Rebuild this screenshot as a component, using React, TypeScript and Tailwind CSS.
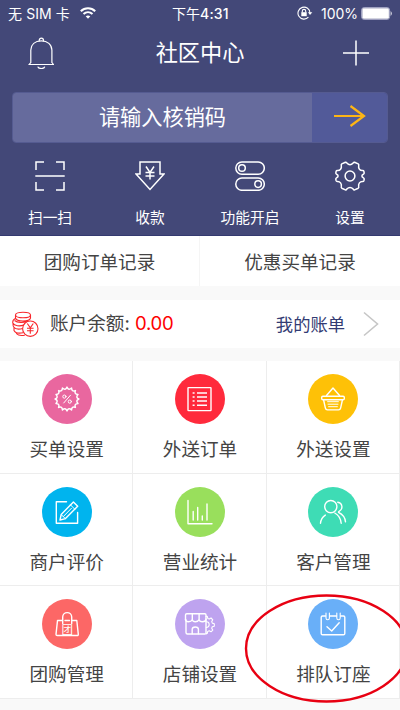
import React from "react";

const CJK = "font-['Noto_Sans_CJK_SC',sans-serif]";
const LATIN = "font-[Inter,'Noto_Sans_CJK_SC',sans-serif]";

// Closed outline with pointed teeth joined by curved valleys.
function ring(cx: number, cy: number, teeth: number, outer: number, inner: number) {
  let d = "";
  for (let i = 0; i < teeth; i++) {
    const a = (i / teeth) * Math.PI * 2 - Math.PI / 2;
    const b = ((i + 0.5) / teeth) * Math.PI * 2 - Math.PI / 2;
    const c = ((i + 1) / teeth) * Math.PI * 2 - Math.PI / 2;
    const p = (r: number, t: number) => `${(cx + r * Math.cos(t)).toFixed(2)} ${(cy + r * Math.sin(t)).toFixed(2)}`;
    if (i === 0) d += `M${p(outer, a)}`;
    d += `Q${p(inner, b)} ${p(outer, c)}`;
  }
  return d + "Z";
}

function Disc({ className, children }: { className: string; children: React.ReactNode }) {
  return (
    <div className={`size-[50px] rounded-full ${className}`}>
      <svg viewBox="0 0 50 50" className="size-full" fill="none" stroke="#fff" strokeWidth="1.4" strokeLinecap="round" strokeLinejoin="round">
        {children}
      </svg>
    </div>
  );
}

const cells = [
  {
    label: "买单设置", color: "bg-[#e9679f]",
    icon: (
      <>
        <path d={ring(25, 25, 16, 11.9, 8.4)} strokeWidth="1.5" />
        <circle cx="22.4" cy="22.6" r="1.6" strokeWidth="1" />
        <circle cx="27.8" cy="27.6" r="1.6" strokeWidth="1" />
        <path d="M28.5 21.2l-6.8 7.8" strokeWidth="1" />
      </>
    ),
  },
  {
    label: "外送订单", color: "bg-[#ff2a3c]",
    icon: (
      <>
        <rect x="13" y="13.6" width="23" height="23" rx="0.5" />
        <path d="M22 19h10M22 23h10M22 27h10M22 31.3h10" strokeLinecap="butt" />
        <path d="M17.6 19h2M17.6 23h2M17.6 27h2M17.6 31.3h2" strokeLinecap="butt" />
      </>
    ),
  },
  {
    label: "外送设置", color: "bg-[#fec107]",
    icon: (
      <>
        <path d="M18.5 21.5L25 14l6.5 7.5" />
        <rect x="13.7" y="22.3" width="22.6" height="3.4" rx="1.2" />
        <path d="M15.6 26l1.8 8.2q.4 1.7 2 1.7h11.2q1.6 0 2-1.7l1.8-8.2" />
        <path d="M19.6 27.7h10.8M20 30.2h10M20.6 32.7h8.8" strokeWidth="1" />
      </>
    ),
  },
  {
    label: "商户评价", color: "bg-[#00b4ee]",
    icon: (
      <>
        <path d="M24.5 14.7H14.3v21.5h21.3V25.5" />
        <path d="M18 33l1.2-5.5L31.4 15l4.3 4.2L23.5 31.6z" />
        <path d="M28.6 18l4.2 4.2M21.4 29.5l8-8.2M19.3 27.7l4 3.8" strokeWidth="1" />
      </>
    ),
  },
  {
    label: "营业统计", color: "bg-[#99df5c]",
    icon: (
      <>
        <path d="M13 13.5v23.2h24" />
        <path d="M18.2 24.5v8.5M22.7 20.5v12.5M27.3 29v4M32 17v16" />
      </>
    ),
  },
  {
    label: "客户管理", color: "bg-[#3edcb5]",
    icon: (
      <>
        <circle cx="22.8" cy="19.6" r="6.1" />
        <path d="M29.8 15.2c4.7.8 5.8 6.8 1 9.4" />
        <path d="M12.5 36.3q.4-5.3 4.8-8.2M26.8 26c4.3 2.4 6 6 6.4 10.3M30.5 25.3c4.3 2 6.7 5.8 7 9.6" />
      </>
    ),
  },
  {
    label: "团购管理", color: "bg-[#fc6766]",
    icon: (
      <>
        <path d="M20 21.5h-4.5L14 35.3q0 1.2 1.2 1.2h20q1.2 0 1.1-1.2L34.8 21.5h-4.6M23 21.5h4.5" />
        <path d="M20.7 24.5v-6.4c0-6 9-6 9 0v6.4" />
        <text x="19.4" y="34.6" fontSize="11.5" fill="#fff" stroke="none" className={CJK}>团</text>
      </>
    ),
  },
  {
    label: "店铺设置", color: "bg-[#bea3ef]",
    icon: (
      <>
        <path d="M29.8 35H12.5q-1.5 0-1.5-1.5V20.7M10.5 21v-5q0-1.3 1.3-1.3h18q1.2 0 1.2 1.3v5" />
        <path d="M10.5 20.5c.3 3 5.4 3 6.8 0 .5 3 5.5 3 6.8 0 .5 3 6.2 3 6.9 0M17.3 14.7v6M24.1 14.7v6M31 20v15M17.2 34.8v-4.5c0-3 6.2-3 6.2 0v4.5" />
        <path d="M31 17.4h1.3l.5 2 1.5.6 1.8-1 1.7 1.8-1.1 1.8.6 1.5 2 .6v2.5l-2 .6-.6 1.5 1.1 1.8-1.8 1.7-1.8-1-1.5.6-.4 2H31M31.3 22.7a2.9 2.9 0 0 1 0 5.8" strokeWidth="1.1" />
      </>
    ),
  },
  {
    label: "排队订座", color: "bg-[#69aff8]",
    icon: (
      <>
        <path d="M17.5 17h-3q-1.3 0-1.3 1.3V34.5q0 1.3 1.3 1.3h21q1.3 0 1.3-1.3V18.3q0-1.3-1.3-1.3h-2.8M22 17h6.5" />
        <path d="M18 14v5c0 2.4 3.4 2.4 3.4 0v-5M28.8 14v5c0 2.4 3.4 2.4 3.4 0v-5" strokeWidth="1.1" />
        <path d="M19 27.8l4.7 4.2 7.5-8.3" />
      </>
    ),
  },
];

const actions = [
  {
    label: "扫一扫",
    icon: <path d="M9 1H1v8M21 1h8v8M9 29H1v-8M21 29h8v-8M.3 15h29.4" />,
  },
  {
    label: "收款",
    icon: (
      <>
        <path d="M5 .9h20v12h4L15 28.4 1 12.9h4z" />
        <path d="M11 5.5l4 6 4-6M15 11.5v7M10.5 11.5h9M10.5 15h9" />
      </>
    ),
  },
  {
    label: "功能开启",
    icon: (
      <>
        <rect x=".8" y=".9" width="28.5" height="12.3" rx="6.1" />
        <rect x=".8" y="17" width="28.5" height="12.3" rx="6.1" />
        <circle cx="7" cy="7" r="3.3" />
        <circle cx="23.1" cy="23.1" r="3.3" />
      </>
    ),
  },
  {
    label: "设置",
    icon: (
      <>
        <path
          strokeLinejoin="round"
          d="M10.4 1.2Q11.3 1 11.8 2q3.200 3.400 6.400 0 .5-1 1.400-.8l3.600 1.700q.8.500.5 1.500c-.6 3.200 1.200 5.300 4 5.100q1 0 1.200.9l.3 1.700q0 .8-.8 1.100c-2 .8-2 2.800 0 3.600q.8.400.8 1.200l-.3 1.700q-.3.900-1.200.9c-2.800-.2-4.600 1.900-4 5.100q.3 1-.5 1.500l-3.600 1.700q-.9.200-1.400-.8-3.200-3.400-6.400 0-.5 1-1.400.8l-3.600-1.700q-.8-.5-.5-1.500c.6-3.200-1.200-5.300-4-5.100q-1 0-1.200-.9L.8 18q0-.8.800-1.200c2-.8 2-2.800 0-3.600q-.8-.3-.8-1.100l.3-1.700q.2-.9 1.200-.9c2.800.2 4.600-1.900 4-5.100q-.3-1 .5-1.500z"
        />
        <circle cx="15" cy="15" r="4.900" />
      </>
    ),
  },
];

export default function App() {
  return (
    <div className={`relative h-[710px] w-[400px] overflow-hidden bg-[#f9f9f9] ${CJK} text-[#444]`}>
      <header className="h-[236px] border-b border-[#343a70] bg-[#434878] text-white">
        <div className={`flex h-[26px] items-center text-[14px] ${LATIN}`}>
          <span className="ml-[8px] w-[66px] whitespace-nowrap tracking-[0.1px]">无 SIM 卡</span>
          <svg viewBox="0 0 16 12" className="ml-[6px] h-[12px] w-[16px]" fill="none" stroke="#fff" strokeWidth="2">
            <path d="M.8 4.3c4-4 10.400-4 14.400 0M3.500 7c2.600-2.500 6.400-2.500 9 0" />
            <path d="M8 11.800L5.700 9.300q2.300-1.800 4.600 0z" fill="#fff" stroke="none" />
          </svg>
          <span className="ml-[76px] w-[66px] whitespace-nowrap">
            下午<span className="font-medium tracking-[0.2px]">4:31</span>
          </span>
          <svg viewBox="0 0 16 14" className="ml-[59px] h-[14px] w-[16px]" fill="none" stroke="#fff" strokeWidth="1.1">
            <path d="M11.400 11.200A6 6 0 1 1 13 7" />
            <path d="M10.900 6.300h4.400L13 9z" fill="#fff" stroke="none" />
            <path d="M4.300 6.200h5.400v4H4.300z" fill="#fff" stroke="none" />
            <path d="M5.300 6.500V5c0-2.200 3.400-2.200 3.400 0v1.500" />
          </svg>
          <span className="ml-[8px] w-[38px] whitespace-nowrap">100%</span>
          <svg viewBox="0 0 32 13" className="ml-[2px] h-[13px] w-[32px]">
            <rect x=".6" y=".6" width="28" height="11.8" rx="2.5" fill="none" stroke="#a9abc8" />
            <rect x="1.3" y="1.3" width="26.6" height="10.4" rx="1.4" fill="#fff" />
            <path d="M29.700 4q2 2.500 0 5z" fill="#fff" />
          </svg>
        </div>
        <div className="flex h-[53px] items-center justify-between pl-[28px] pr-[31px]">
          <svg viewBox="0 0 26 32" className="h-[32px] w-[26px]" fill="none" stroke="#fff" strokeWidth="1.2" strokeLinecap="round">
            <path d="M2.800 25.500V13C3 7.500 7 3.900 13.300 3.900S23.700 7.500 23.900 13v12.500M2.800 25.500L1.200 27.500h24.300l-1.600-2" />
            <path d="M11.200 3.800c0-3.600 4.300-3.600 4.300 0M10 30c.8 2 5.800 2 6.600 0" />
          </svg>
          <h1 className="pb-[3px] pl-[3px] text-[22.2px] leading-none">社区中心</h1>
          <svg viewBox="0 0 26 26" className="h-[26px] w-[26px]" stroke="#fff" strokeWidth="1.5">
            <path d="M0 13h26M13 .5v25" />
          </svg>
        </div>
        <div className="mx-3 mt-[13px] flex h-[51px] overflow-hidden rounded border border-[#555b91]">
          <div className="flex w-[299px] items-center justify-center bg-[#666b9d] pb-[3px] text-[21.2px]">请输入核销码</div>
          <div className="flex flex-1 items-center justify-center bg-[#525a99] pb-[3px]">
            <svg viewBox="0 0 34 24" className="h-[24px] w-[34px]" fill="none" stroke="#fdb515" strokeWidth="2.2">
              <path d="M1 12h30M17.500 2l13.500 10-13.500 10" />
            </svg>
          </div>
        </div>
        <div className="mt-[18px] grid grid-cols-4">
          {actions.map((a) => (
            <div key={a.label} className="flex flex-col items-center">
              <svg viewBox="0 0 30 30" className="size-[30px]" fill="none" stroke="#fff" strokeWidth="1.5">
                {a.icon}
              </svg>
              <span className="mt-[14px] text-[14.7px] leading-[24px]">{a.label}</span>
            </div>
          ))}
        </div>
      </header>

      <nav className="grid h-[50px] grid-cols-2 bg-white text-[18.6px]">
        <div className="flex items-center justify-center border-r border-[#f5f5f5]">团购订单记录</div>
        <div className="flex items-center justify-center">优惠买单记录</div>
      </nav>

      <section className="mt-[14px] flex h-[48px] items-center bg-white text-[18.6px]">
        <svg viewBox="0 0 27 27" className="ml-[12px] size-[27px]" fill="none" stroke="#f8262b" strokeWidth="1.1">
          <ellipse cx="11" cy="4" rx="7.5" ry="2.8" />
          <path d="M3.500 4v3c1 4 14 4 15 0V4M3.500 7.500C1 8.500.5 10 .8 12c1.500 3 7 3.500 11 2M1 12.500c0 1.500 0 3 .7 3.500 1.600 2.200 6 2.300 9 1.500M2 16.200v3.300c1 2.200 5 3 9 2.300M3.800 21c.4 3 4 4 9 3.200M2.500 9.500c3 2.500 9 2.700 12.500.5" />
          <circle cx="18.3" cy="17.7" r="7.7" fill="#fff" />
          <path d="M15.300 12.500l3 4.300 3-4.300M18.300 16.800v6M15 17.200h6.600M15 19.700h6.600" />
        </svg>
        <span className={`ml-[11px] whitespace-nowrap ${LATIN}`}>
          账户余额: <span className="tracking-[-0.3px] text-[#fe0000]">0.00</span>
        </span>
        <span className="ml-auto pb-px text-[17.3px] text-[#333b73]">我的账单</span>
        <svg viewBox="0 0 16 26" className="ml-[18px] mr-[21px] h-[26px] w-[16px]" fill="none" stroke="#c6c6c6" strokeWidth="1.6">
          <path d="M1 1.500l13.500 11.500L1 24.500" />
        </svg>
      </section>

      <main className="mt-[13px] grid grid-cols-3 auto-rows-[112.5px]">
        {cells.map((c) => (
          <div key={c.label} className="flex flex-col items-center border-b border-r border-[#ededed] bg-white pl-px pt-[13px]">
            <Disc className={c.color}>{c.icon}</Disc>
            <span className="mt-[10px] text-[18.6px] leading-[28px]">{c.label}</span>
          </div>
        ))}
      </main>

      <svg viewBox="0 0 160 112" className="pointer-events-none absolute left-[240px] top-[592px] h-[112px] w-[160px]" fill="none">
        <ellipse cx="86.5" cy="56.5" rx="80.5" ry="53" stroke="#e80012" strokeWidth="2.4" />
      </svg>
    </div>
  );
}
